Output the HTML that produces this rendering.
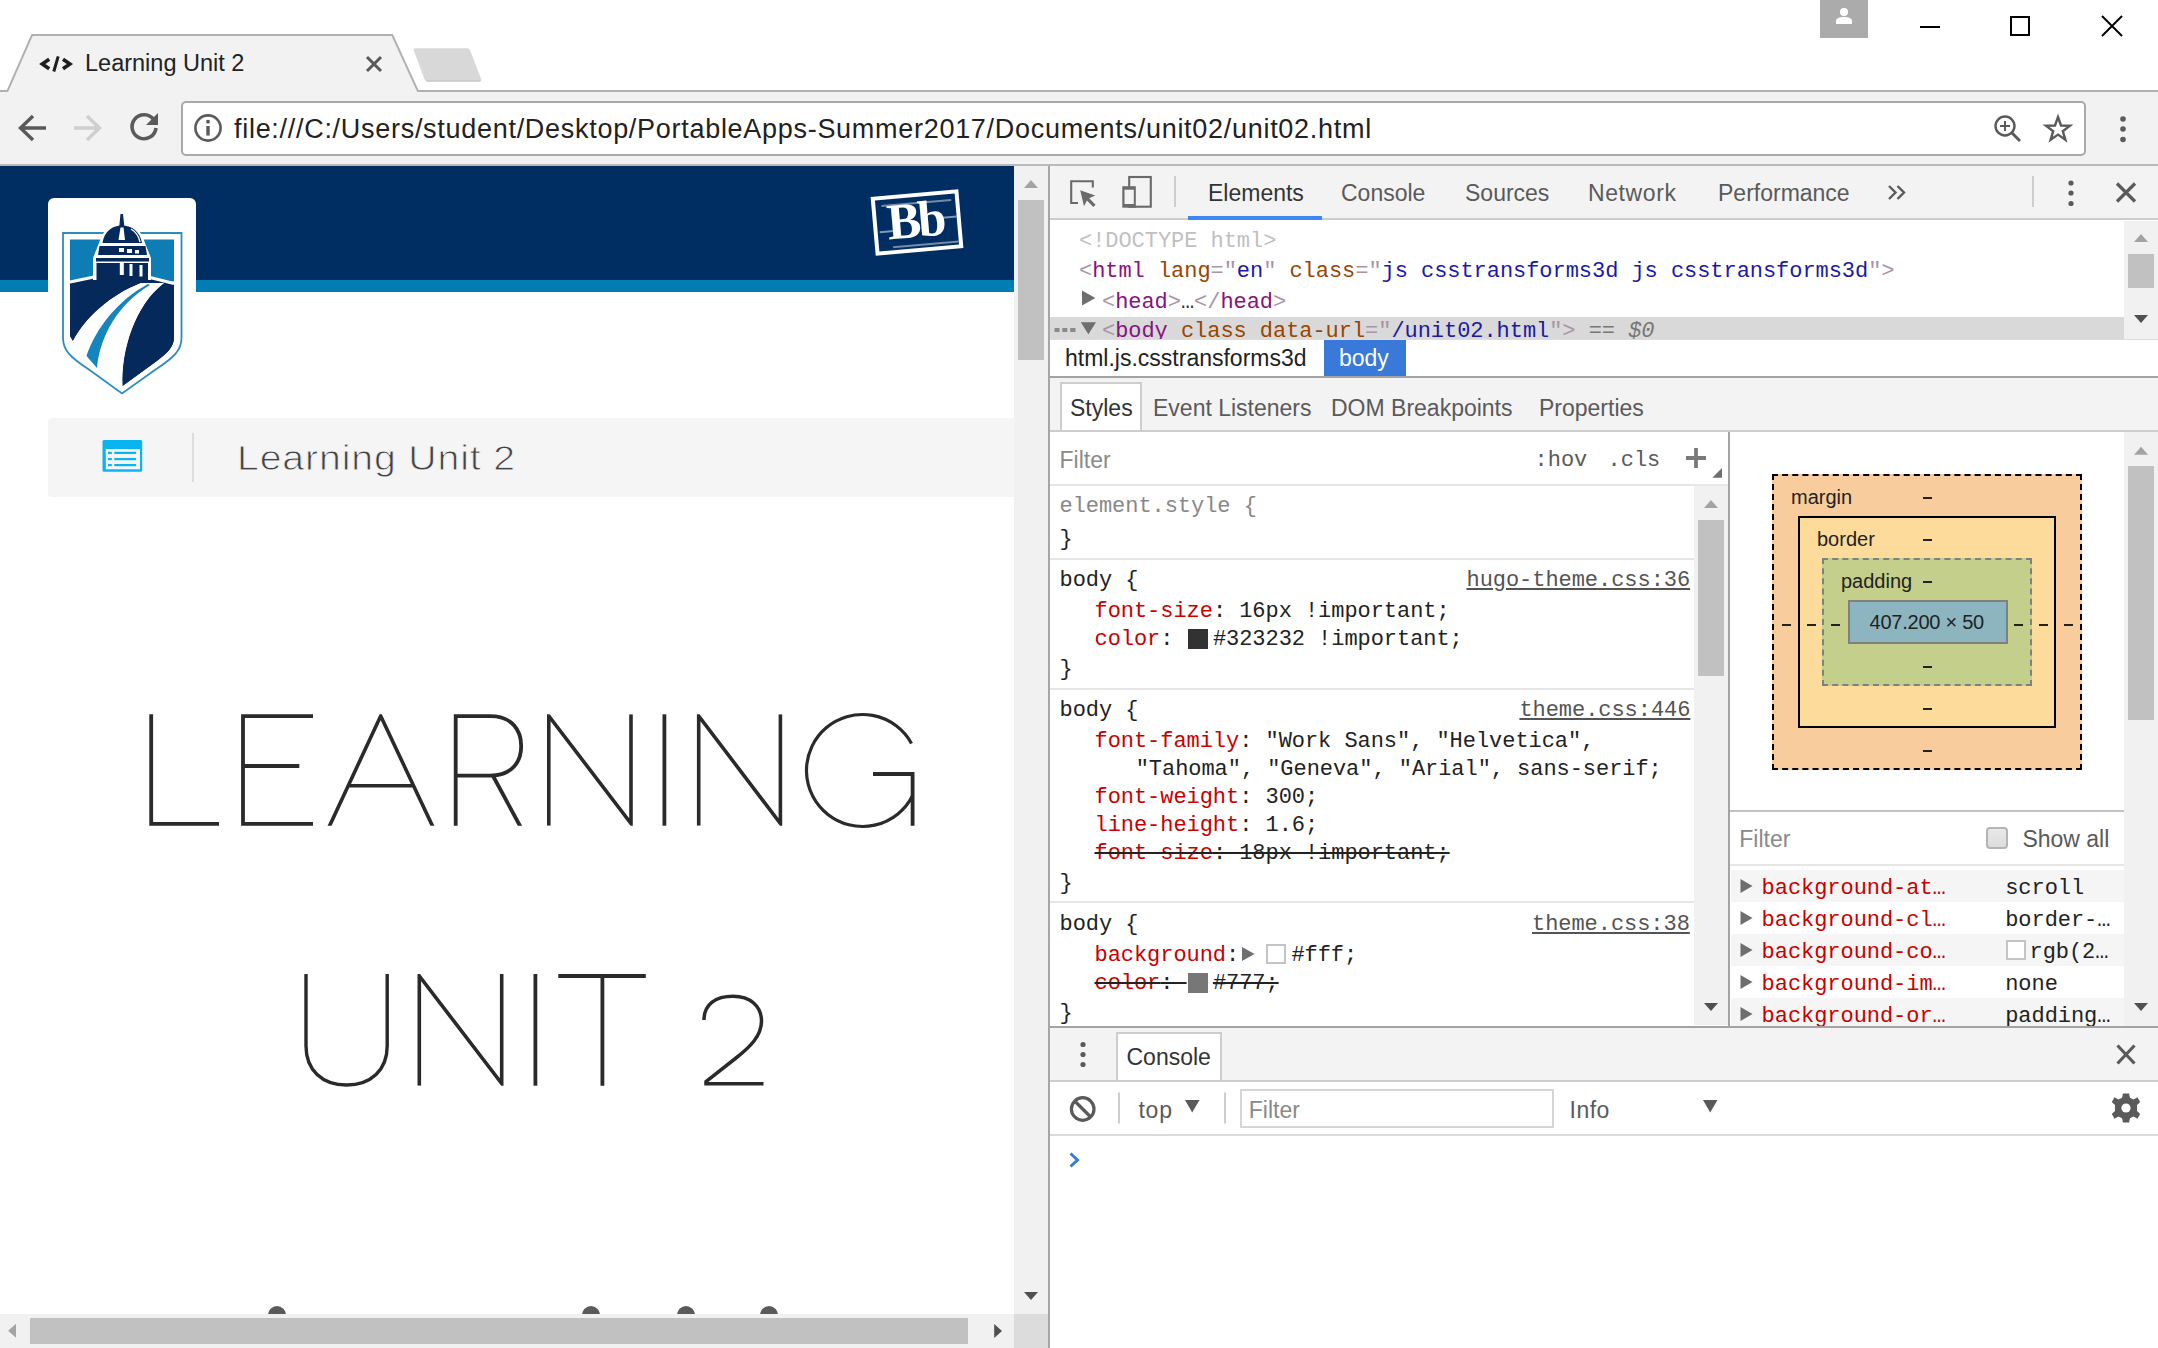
<!DOCTYPE html>
<html lang="en">
<head>
<meta charset="utf-8">
<title>Learning Unit 2</title>
<style>
*{box-sizing:border-box;margin:0;padding:0}
html,body{width:2158px;height:1348px;overflow:hidden;background:#fff}
body{position:relative;font-family:"Liberation Sans",sans-serif;color:#222}
.abs{position:absolute}
.t{position:absolute;white-space:nowrap;line-height:1}
.ui{font-family:"Liberation Sans",sans-serif;font-size:23px;color:#5a5a5a}
.mono{font-family:"Liberation Mono",monospace;font-size:22px;letter-spacing:-0.05px;color:#222}
svg{position:absolute;overflow:visible}
/* ---------- browser chrome ---------- */
#titlebar{left:0;top:0;width:2158px;height:91px;background:#fff}
#toolbar{left:0;top:90px;width:2158px;height:76px;background:#f2f2f2;border-top:2px solid #b3b3b3;border-bottom:2px solid #b9b9b9}
#urlbox{left:181px;top:101px;width:1905px;height:55px;background:#fff;border:2px solid #a9a9a9;border-radius:5px}
/* ---------- page ---------- */
#page{left:0;top:166px;width:1014px;height:1148px;background:#fff;overflow:hidden}
#navy{left:0;top:0;width:1014px;height:114px;background:#002d62}
#stripe{left:0;top:114px;width:1014px;height:12px;background:#007db3}
#logobox{left:48px;top:32px;width:148px;height:200px;background:#fff;border-radius:6px}
#crumb{left:48px;top:252px;width:966px;height:79px;background:#f5f5f5;border-radius:4px 0 0 4px}
#vscroll{left:1014px;top:166px;width:34px;height:1148px;background:#f1f1f1}
#hscroll{left:0;top:1314px;width:1014px;height:34px;background:#f1f1f1}
#corner{left:1014px;top:1314px;width:34px;height:34px;background:#dcdcdc}
.thumb{position:absolute;background:#c1c1c1}
#split{left:1048px;top:166px;width:2px;height:1182px;background:#a6a6a6}
/* ---------- devtools ---------- */
#dt .bar{position:absolute;left:0;width:1108px;background:#f3f3f3}
.sx{color:#a894a6}.tg{color:#881280}.an{color:#994500}.av{color:#1a1aa6}
.pn{color:#c80000}.gr{color:#888}
.lnk{color:#545454;text-decoration:underline}
.sep{position:absolute;left:0;width:644px;height:2px;background:#e6e6e6}
.row{position:absolute;left:0;height:24px}
.sw{position:absolute;width:20px;height:20px;border:2px solid #7d7d7d}

#dt{left:1050px;top:166px;width:1108px;height:1182px;background:#fff;overflow:hidden}
</style>
</head>
<body>
<!-- ===== TITLE BAR ===== -->
<div id="titlebar" class="abs"></div>
<div id="toolbar" class="abs"></div>
<div id="urlbox" class="abs"></div>

<!-- tab shape -->
<svg class="abs" style="left:0;top:0" width="2158" height="95" viewBox="0 0 2158 95">
  <path d="M0,90.900 H7.500 L32,35.100 H392.300 L417.800,90.900 H2158 V95 H0 Z" fill="#f2f2f2"/>
  <path d="M0,90.900 H7.500 L32,35.100 H392.300 L417.800,90.900 H2158" fill="none" stroke="#b0b0b0" stroke-width="2" stroke-linejoin="round"/>
  <!-- new tab button -->
  <path d="M416.500,48.200 H467 C468.500,48.200 469.500,49 470,50.200 L481.200,79 C481.800,80.500 481,81.200 479.500,81.200 H427.500 C426,81.200 425,80.500 424.500,79.200 L413.800,50.500 C413.300,49 414,48.200 416.500,48.200 Z" fill="#d8d8d8"/>
  <path d="M426.500,81 H480.500" stroke="#c6c6c6" stroke-width="1.400"/>
  <!-- favicon </> -->
  <g fill="none" stroke="#1e1e1e" stroke-linejoin="miter"><path d="M49.200,59.200 L42.300,64 L49.200,68.800" stroke-width="3.600"/><path d="M58.200,56.300 L53.800,71.500" stroke-width="3"/><path d="M63,59.200 L69.900,64 L63,68.800" stroke-width="3.600"/></g>
  <!-- tab close -->
  <path d="M367,57 L381,71 M381,57 L367,71" stroke="#5a5a5a" stroke-width="3" fill="none"/>
  <!-- profile button -->
  <rect x="1820" y="0" width="48" height="38" fill="#ababab"/>
  <circle cx="1844" cy="12" r="4" fill="#fff"/>
  <path d="M1836,24 V21 C1836,18 1840,17 1844,17 C1848,17 1852,18 1852,21 V24 Z" fill="#fff"/>
  <!-- window controls -->
  <path d="M1920,27 H1940" stroke="#000" stroke-width="2"/>
  <rect x="2011" y="17" width="18" height="18" fill="none" stroke="#000" stroke-width="2"/>
  <path d="M2102,16 L2122,36 M2122,16 L2102,36" stroke="#000" stroke-width="2"/>
</svg>
<div class="t" id="tabtitle" style="left:85px;top:52px;font-size:23.5px;color:#222">Learning Unit 2</div>
<!-- nav icons -->
<svg class="abs" style="left:0;top:90px" width="2158" height="76" viewBox="0 90 2158 76">
  <g fill="none" stroke="#5a5a5a" stroke-width="3.4">
    <path d="M46,128 H21 M33,116 L20.5,128 L33,140"/>
  </g>
  <g fill="none" stroke="#cfcfcf" stroke-width="3.4">
    <path d="M74,128 H99 M87,116 L99.5,128 L87,140"/>
  </g>
  <!-- reload -->
  <g fill="none" stroke="#5a5a5a" stroke-width="3.6">
    <path d="M154,120 A12,12 0 1 0 156,128"/>
  </g>
  <path d="M158,113 V125 H146 Z" fill="#5a5a5a"/>
  <!-- info icon -->
  <circle cx="208" cy="128" r="12.600" fill="none" stroke="#5a5a5a" stroke-width="2.600"/>
  <rect x="206.300" y="126" width="3.400" height="9.500" fill="#5a5a5a"/>
  <rect x="206.300" y="120" width="3.400" height="3.400" fill="#5a5a5a"/>
  <!-- zoom icon -->
  <circle cx="2005" cy="126" r="9.500" fill="none" stroke="#5a5a5a" stroke-width="2.4"/>
  <path d="M2012,133 L2020,141" stroke="#5a5a5a" stroke-width="3"/>
  <path d="M2000,126 H2010 M2005,121 V131" stroke="#5a5a5a" stroke-width="2"/>
  <!-- star -->
  <path d="M2058.0,117.0 L2061.0,125.5 L2070.0,125.7 L2062.8,131.2 L2065.4,139.8 L2058.0,134.6 L2050.6,139.8 L2053.2,131.2 L2046.0,125.7 L2055.0,125.5 Z" fill="none" stroke="#5a5a5a" stroke-width="2.400" stroke-linejoin="miter"/>
  <!-- menu dots -->
  <circle cx="2123" cy="119" r="2.800" fill="#5a5a5a"/>
  <circle cx="2123" cy="129" r="2.800" fill="#5a5a5a"/>
  <circle cx="2123" cy="139.500" r="2.800" fill="#5a5a5a"/>
</svg>
<div class="t" id="url" style="left:234px;top:116px;font-size:27px;letter-spacing:0.71px;color:#222">file:///C:/Users/student/Desktop/PortableApps-Summer2017/Documents/unit02/unit02.html</div>
<!--CHROME-->
<!-- ===== PAGE ===== -->
<div id="page" class="abs">
  <div id="navy" class="abs"></div>
  <div id="stripe" class="abs"></div>
  <div id="logobox" class="abs"></div>
  <div id="crumb" class="abs"></div>

  <!-- shield logo (absolute screen coords via viewBox) -->
  <svg style="left:40px;top:24px" width="170" height="220" viewBox="40 190 170 220">
    <!-- outer thin border -->
    <path d="M63,233 H181.500 V338 C181.500,350 174.500,357 155.600,369.500 L122,393.500 L88.900,369.500 C70,357 63,350 63,338 Z" fill="#fff" stroke="#2a8cc0" stroke-width="1.8"/>
    <!-- sky -->
    <path d="M70,239.500 H174 V281.500 L70,281.500 Z" fill="#0e7db6"/>
    <!-- ground navy left + right -->
    <path d="M70,283 L94,278 H150 L174,284.500 V337 C174,347 168,353 152,364.500 L122.500,386 C121,350 135,305 164,283 L141,283 C110,295 85,318 73,341 L70,336 Z" fill="#06295c"/>
    <path d="M70,283 H141 C110,295 85,318 73,341 L70,336 Z" fill="#06295c"/>
    <path d="M164,283 L174,284.500 V337 C174,347 168,353 152,364.500 L122.500,386 C121,350 135,305 164,283 Z" fill="#06295c"/>
    <!-- white road -->
    <path d="M141,283 H164 C135,305 121,350 122.500,386 L78,358 C75,352 73.500,347 73,341 C85,318 110,295 141,283 Z" fill="#fff"/>
    <!-- horizon white line -->
    <path d="M70,282 L94,277 M150,277.500 L174,283.500" stroke="#fff" stroke-width="3" fill="none"/>
    <!-- blue stripe on road -->
    <path d="M148,284 C118,300 96,328 86.500,356 L97,368 C100,336 118,304 150,285 Z" fill="#1585bd"/>
    <!-- dome white halo -->
    <path d="M93,280 V258 L99,243 C103,229 112,224 118,223 L120,212 H124 L126,223 C132,224 141,229 145,243 L151,258 V280 Z" fill="#fff"/>
    <!-- dome -->
    <path d="M119.300,226 L120.500,214 H123 L124.300,226 Z" fill="#06295c"/>
    <path d="M102.500,243 C104,231 113,225.500 122,225.500 C131,225.500 140,231 142,243 Z" fill="#06295c"/>
    <path d="M118.500,240 L120.500,227.500 H123.500 L125,240 Z" fill="#fff"/>
    <path d="M131,229 C136,232 139,237 140,242" stroke="#fff" stroke-width="1.300" fill="none"/>
    <path d="M99.500,246 H145.500 L147,255 H98 Z" fill="#06295c"/>
    <path d="M96,258 H149 V261.500 H96 Z" fill="#06295c"/>
    <path d="M96.500,263 H148 V283 H96.500 Z" fill="#06295c"/>
    <rect x="119" y="248" width="5" height="4" fill="#fff"/><rect x="127" y="249" width="5" height="4" fill="#fff"/><rect x="135" y="250" width="4" height="3.500" fill="#fff"/>
    <rect x="119.800" y="263" width="4" height="12" fill="#fff"/><rect x="129.500" y="264" width="3" height="12" fill="#fff"/><rect x="139.500" y="265" width="3" height="11.500" fill="#fff"/>
  </svg>
  <!-- Bb logo -->
  <div class="abs" style="left:873px;top:27px;width:88px;height:59px;border:4px solid #fff;transform:rotate(-5deg);overflow:hidden">
    <div class="t" style="left:10px;top:-2px;font-family:'Liberation Serif',serif;font-weight:bold;font-size:51px;letter-spacing:-3px;color:#fff">Bb</div>
    <div class="abs" style="left:6px;top:5px;width:70px;height:1.500px;background:rgba(255,255,255,.45)"></div>
    <div class="abs" style="left:2px;top:31px;width:14px;height:1.500px;background:rgba(255,255,255,.5)"></div>
    <div class="abs" style="left:66px;top:22px;width:14px;height:1.500px;background:rgba(255,255,255,.5)"></div>
    <div class="abs" style="left:14px;top:47px;width:66px;height:1.500px;background:rgba(255,255,255,.45)"></div>
  </div>
  <!-- crumb icon -->
  <svg style="left:100px;top:272px" width="46" height="36" viewBox="100 438 46 36">
    <rect x="102.500" y="440" width="39.700" height="31.800" rx="1.500" fill="#0ab4f0"/>
    <rect x="105.800" y="449" width="34.200" height="20.300" fill="#f4f6fb"/>
    <g fill="#0ab4f0">
      <rect x="114.300" y="451.800" width="21.800" height="2.200"/><rect x="114.300" y="458" width="21.800" height="2.200"/><rect x="114.300" y="464" width="21.800" height="2.200"/>
      <rect x="108" y="451.800" width="3.800" height="2.200"/><rect x="108" y="458" width="3.800" height="2.200"/><rect x="108" y="464" width="3.800" height="2.200"/>
    </g>
  </svg>
  <div class="abs" style="left:192px;top:267px;width:2px;height:49px;background:#dcdcdc"></div>
  <div class="t" id="crumbtxt" style="left:237px;top:274px;font-size:35px;letter-spacing:0.78px;transform:scaleX(1.12);transform-origin:0 0;color:#444;-webkit-text-stroke:0.9px #f5f5f5">Learning Unit 2</div>
  <!-- big heading -->
  <svg style="left:0;top:0" width="1014" height="1148" viewBox="0 166 1014 1148" fill="none" stroke="#2a2a2a" stroke-width="3.800" stroke-linecap="butt" stroke-linejoin="miter">
    <defs><clipPath id="ln1"><rect x="0" y="714.300" width="1014" height="111.400"/></clipPath><clipPath id="ln2"><rect x="0" y="974" width="1014" height="111.700"/></clipPath></defs>
    <!-- L -->
    <path d="M151.200,714.300 V823.800 H219"/>
    <!-- E -->
    <path d="M313,716.200 H243 V823.800 H313 M243,766 H299.300"/>
    <!-- A -->
    <path clip-path="url(#ln1)" d="M328.700,827.700 L380.700,716 L433.300,827.700 M349,785.800 H413" stroke-width="3.600"/>
    <!-- R -->
    <path d="M455.700,825.700 V716.200 H490 C512,716.200 521.200,730 521.200,746 C521.200,762 512,775.600 490,775.600 H455.700"/>
    <path clip-path="url(#ln1)" d="M492.500,775 L521,827.700"/>
    <!-- N -->
    <path clip-path="url(#ln1)" d="M548.800,825.700 V716 L631,823.500 V714.300" stroke-width="3.600"/>
    <!-- I -->
    <path d="M664.400,714.300 V825.700"/>
    <!-- N -->
    <path clip-path="url(#ln1)" d="M698.700,825.700 V716 L780.400,823.500 V714.300" stroke-width="3.600"/>
    <!-- G -->
    <path d="M911.500,743.400 A56,56 0 1 0 912.500,795.700" stroke-width="3.200"/>
    <path d="M873,774 H912.600 V825.700"/>
    <!-- U -->
    <path d="M306,974 V1046 C306,1070 322,1085 346.600,1085 C371,1085 387.200,1070 387.200,1046 V974" stroke-width="3.400"/>
    <!-- N -->
    <path clip-path="url(#ln2)" d="M419.300,1085.700 V976 L501.700,1083.500 V974" stroke-width="3.600"/>
    <!-- I -->
    <path d="M535.400,974 V1085.700"/>
    <!-- T -->
    <path d="M558.300,976 H645.800 M602.400,976 V1085.700"/>
    <!-- 2 -->
    <path d="M704,1020 C704,1004 716,996.300 733,996.300 C750,996.300 761.500,1006 761.500,1021 C761.500,1036 750,1047 736,1058 L706,1081.500 V1083.800 H763.500" stroke-width="3.500"/>
  </svg>
  <!-- dots at bottom -->
  <div class="abs" style="left:268px;top:1140px;width:18px;height:18px;border-radius:50%;background:#5a5a5a"></div>
  <div class="abs" style="left:582px;top:1140px;width:18px;height:18px;border-radius:50%;background:#5a5a5a"></div>
  <div class="abs" style="left:677px;top:1140px;width:18px;height:18px;border-radius:50%;background:#5a5a5a"></div>
  <div class="abs" style="left:760px;top:1140px;width:18px;height:18px;border-radius:50%;background:#5a5a5a"></div>
  <!--PAGE-->
</div>
<div id="vscroll" class="abs"><div class="thumb" style="left:4px;top:34px;width:26px;height:160px"></div></div>
<div id="hscroll" class="abs"><div class="thumb" style="left:30px;top:4px;width:938px;height:26px"></div></div>
<div id="corner" class="abs"></div>

<svg class="abs" style="left:0;top:0" width="1050" height="1348" viewBox="0 0 1050 1348">
  <path d="M1024,188 L1031,180 L1038,188 Z" fill="#a3a3a3"/>
  <path d="M1024,1292 L1031,1300 L1038,1292 Z" fill="#505050"/>
  <path d="M16,1323.800 L8.200,1330.800 L16,1337.800 Z" fill="#a3a3a3"/>
  <path d="M994.200,1324 L1002,1331 L994.200,1338 Z" fill="#505050"/>
</svg>
<div id="split" class="abs"></div>
<!-- ===== DEVTOOLS ===== -->
<div id="dt" class="abs">

<!-- main toolbar -->
<div class="bar" style="top:0;height:54px;border-bottom:2px solid #cdcdcd"></div>
<svg style="left:0;top:0" width="1108" height="54" viewBox="1050 166 1108 54">
  <!-- inspect icon -->
  <path d="M1078,203 H1071.200 V181.200 H1092.800 V187.600" fill="none" stroke="#6a6a6a" stroke-width="2.100"/>
  <path d="M1080.200,190.300 L1095.200,195.600 L1089.200,198.300 L1095.600,204.700 L1093.300,207 L1086.900,200.600 L1084,206.200 Z" fill="#6a6a6a"/>
  <!-- device icon -->
  <rect x="1129.200" y="177" width="21.600" height="29.700" fill="none" stroke="#6a6a6a" stroke-width="2.100"/>
  <rect x="1122.300" y="186.200" width="13.500" height="21.500" fill="#6a6a6a"/>
  <rect x="1124.500" y="189.700" width="9.300" height="14.300" fill="#f3f3f3"/>
  <rect x="1174" y="176" width="2" height="31" fill="#cdcdcd"/>
  <rect x="1188" y="216" width="134" height="4" fill="#3f87f5"/>
  <!-- >> -->
  <path d="M1889,186 L1895.500,192.500 L1889,199 M1897.500,186 L1904,192.500 L1897.500,199" fill="none" stroke="#5a5a5a" stroke-width="2.400"/>
  <rect x="2032" y="176" width="2" height="31" fill="#cdcdcd"/>
  <circle cx="2071" cy="183" r="2.600" fill="#5a5a5a"/><circle cx="2071" cy="193" r="2.600" fill="#5a5a5a"/><circle cx="2071" cy="203.500" r="2.600" fill="#5a5a5a"/>
  <path d="M2117,183.500 L2135,201.500 M2135,183.500 L2117,201.500" stroke="#5a5a5a" stroke-width="3.200"/>
</svg>
<div class="t ui" id="tEl" style="left:158px;top:16px;color:#333">Elements</div>
<div class="t ui" id="tCo" style="left:291px;top:16px">Console</div>
<div class="t ui" id="tSo" style="left:415px;top:16px">Sources</div>
<div class="t ui" id="tNe" style="left:538px;top:16px;letter-spacing:0.6px">Network</div>
<div class="t ui" id="tPe" style="left:668px;top:16px">Performance</div>

<!-- DOM tree -->
<div class="abs" style="left:0;top:151px;width:1075px;height:23px;background:#d9d9d9"></div>
<div class="t mono" id="dom1" style="left:29px;top:65px;color:#c0c0c0">&lt;!DOCTYPE html&gt;</div>
<div class="t mono" id="dom2" style="left:29px;top:95px"><span class="sx">&lt;</span><span class="tg">html</span> <span class="an">lang</span><span class="sx">="</span><span class="av">en</span><span class="sx">"</span> <span class="an">class</span><span class="sx">="</span><span class="av">js csstransforms3d js csstransforms3d</span><span class="sx">"&gt;</span></div>
<div class="t mono" id="dom3" style="left:52px;top:126px"><span class="sx">&lt;</span><span class="tg">head</span><span class="sx">&gt;</span><span style="color:#333">…</span><span class="sx">&lt;/</span><span class="tg">head</span><span class="sx">&gt;</span></div>
<div class="abs" style="left:0;top:151px;width:1075px;height:22px;overflow:hidden">
  <div class="t mono" id="dom4" style="left:52px;top:4px"><span class="sx">&lt;</span><span class="tg">body</span> <span class="an">class</span> <span class="an">data-url</span><span class="sx">="</span><span class="av">/unit02.html</span><span class="sx">"&gt;</span><span style="color:#777"> == <i>$0</i></span></div>
</div>
<svg style="left:0;top:64px" width="1108" height="112" viewBox="1050 230 1108 112">
  <path d="M1082,290.500 L1095.400,298 L1082,305.500 Z" fill="#6e6e6e"/>
  <path d="M1080.800,322.300 H1096 L1088.400,334.300 Z" fill="#6e6e6e"/>
  <rect x="1054.500" y="328" width="5" height="4" fill="#8a8a8a"/><rect x="1062.300" y="328" width="5" height="4" fill="#8a8a8a"/><rect x="1070.200" y="328" width="5.300" height="4" fill="#8a8a8a"/>
</svg>
<!-- elements scrollbar -->
<div class="abs" style="left:1074px;top:55px;width:34px;height:118px;background:#f1f1f1"><div class="thumb" style="left:4px;top:33px;width:26px;height:34px"></div></div>
<svg style="left:1074px;top:55px" width="34" height="118" viewBox="2124 221 34 118">
  <path d="M2134,242 L2141,234 L2148,242 Z" fill="#a3a3a3"/>
  <path d="M2134,315 L2141,323 L2148,315 Z" fill="#505050"/>
</svg>
<!-- breadcrumb -->
<div class="abs" style="left:0;top:173px;width:1108px;height:39px;background:#fff;border-top:1px solid #ddd;border-bottom:2px solid #a3a3a3"></div>
<div class="abs" style="left:274px;top:174px;width:82px;height:36px;background:#3879d9"></div>
<div class="t ui" id="bc1" style="left:15px;top:181px;color:#222">html.js.csstransforms3d</div>
<div class="t ui" id="bc2" style="left:289px;top:181px;color:#fff">body</div>
<!-- sub tabs -->
<div class="bar" style="top:212px;height:54px;border-bottom:2px solid #cdcdcd"></div>
<div class="abs" style="left:10px;top:216px;width:82px;height:48px;background:#fff;border:2px solid #cdcdcd;border-bottom:none"></div>
<div class="t ui" id="st1" style="left:20px;top:231px;color:#333">Styles</div>
<div class="t ui" id="st2" style="left:103px;top:231px">Event Listeners</div>
<div class="t ui" id="st3" style="left:281px;top:231px">DOM Breakpoints</div>
<div class="t ui" id="st4" style="left:489px;top:231px">Properties</div>

<!-- styles pane -->
<div class="abs" style="left:0;top:318px;width:678px;height:2px;background:#e6e6e6"></div>
<div class="sep" style="top:392px"></div>
<div class="sep" style="top:522px"></div>
<div class="sep" style="top:735px"></div>
<div class="t ui" id="s_f" style="left:9.5px;top:281px;color:#8a8a8a;top:282.5px">Filter</div>
<div class="t mono" id="s_hov" style="left:484.5999999999999px;top:283.5px;color:#5a5a5a">:hov</div>
<div class="t mono" id="s_cls" style="left:557.5999999999999px;top:283.5px;color:#5a5a5a">.cls</div>
<div class="t mono" id="s1" style="left:9.5px;top:329.5px;color:#888">element.style {</div>
<div class="t mono" id="s2" style="left:9.5px;top:362.5px;">}</div>
<div class="t mono" id="s3" style="left:9.5px;top:404px;">body {</div>
<div class="t mono lnk" id="l1" style="left:416.5px;top:404px;">hugo-theme.css:36</div>
<div class="t mono" id="s4" style="left:44.5px;top:434.5px;"><span class="pn">font-size</span>: 16px !important;</div>
<div class="t mono" id="s5" style="left:44.5px;top:463px;"><span class="pn">color</span>: <span style="display:inline-block;width:26.300px"></span>#323232 !important;</div>
<div class="t mono" id="s6" style="left:9.5px;top:492.5px;">}</div>
<div class="t mono" id="s7" style="left:9.5px;top:534px;">body {</div>
<div class="t mono lnk" id="l2" style="left:469.4000000000001px;top:534px;">theme.css:446</div>
<div class="t mono" id="s8" style="left:44.5px;top:565px;"><span class="pn">font-family</span>: "Work Sans", "Helvetica",</div>
<div class="t mono" id="s9" style="left:85.70000000000005px;top:593px;">"Tahoma", "Geneva", "Arial", sans-serif;</div>
<div class="t mono" id="s10" style="left:44.5px;top:621px;"><span class="pn">font-weight</span>: 300;</div>
<div class="t mono" id="s11" style="left:44.5px;top:649px;"><span class="pn">line-height</span>: 1.6;</div>
<div class="t mono" id="s12" style="left:44.5px;top:677px;text-decoration:line-through;text-decoration-thickness:2px"><span class="pn">font-size</span>: 18px !important;</div>
<div class="t mono" id="s13" style="left:9.5px;top:706.5px;">}</div>
<div class="t mono" id="s14" style="left:9.5px;top:747.5px;">body {</div>
<div class="t mono lnk" id="l3" style="left:482px;top:747.5px;">theme.css:38</div>
<div class="t mono" id="s15" style="left:44.5px;top:778.5px;"><span class="pn">background</span>:</div>
<div class="t mono" id="s15b" style="left:241.4000000000001px;top:778.5px;">#fff;</div>
<div class="t mono" id="s16" style="left:44.5px;top:807px;text-decoration:line-through;text-decoration-thickness:2px"><span class="pn">color</span>: <span style="display:inline-block;width:26.300px"></span>#777;</div>
<div class="t mono" id="s17" style="left:9.5px;top:836.5px;">}</div>
<div class="sw" style="left:138px;top:462.5px;background:#323232;border-color:#323232"></div>
<div class="sw" style="left:216px;top:778px;background:#fff;border-color:#c4c4c4"></div>
<div class="sw" style="left:138px;top:806.5px;background:#777;border-color:#777"></div>
<svg style="left:0;top:266px" width="680" height="595" viewBox="1050 432 680 595">
  <path d="M1686,458 H1706 M1696,448 V468" stroke="#7a7a7a" stroke-width="3.800"/>
  <path d="M1722,468 V477.800 H1712.300 Z" fill="#6e6e6e"/>
  <path d="M1242,947 L1254.500,954 L1242,961 Z" fill="#6e6e6e"/>
</svg>
<!-- styles scrollbar -->
<div class="abs" style="left:644px;top:320px;width:34px;height:539px;background:#f1f1f1"><div class="thumb" style="left:4px;top:34px;width:26px;height:156px"></div></div>
<svg style="left:644px;top:321px" width="34" height="538" viewBox="1694 487 34 538">
  <path d="M1704,508 L1711,500 L1718,508 Z" fill="#a3a3a3"/>
  <path d="M1704,1003 L1711,1011 L1718,1003 Z" fill="#505050"/>
</svg>
<div class="abs" style="left:678px;top:266px;width:2px;height:594px;background:#a3a3a3"></div>

<!-- box model -->
<div class="abs" style="left:722px;top:308px;width:310px;height:296px;background:#f9cc9d;border:2px dashed #000"></div>
<div class="abs" style="left:748px;top:350px;width:258px;height:212px;background:#fddb9a;border:2px solid #000"></div>
<div class="abs" style="left:772px;top:392px;width:210px;height:128px;background:#c3cf8a;border:2px dashed #808080"></div>
<div class="abs" style="left:798px;top:434px;width:160px;height:44px;background:#8cb5c0;border:2px solid #808080"></div>
<div class="t ui" id="bm1" style="left:741px;top:320.5px;font-size:20px;color:#222">margin</div>
<div class="t ui" id="bm2" style="left:767px;top:362.5px;font-size:20px;color:#222">border</div>
<div class="t ui" id="bm3" style="left:791px;top:404.5px;font-size:20px;color:#222">padding</div>
<div class="t ui" id="bm4" style="left:819.6px;top:446px;font-size:20px;letter-spacing:-0.25px;color:#222">407.200 × 50</div>
<div class="abs" style="left:872.5px;top:330.5px;width:9px;height:2px;background:#222"></div><div class="abs" style="left:872.5px;top:372.5px;width:9px;height:2px;background:#222"></div><div class="abs" style="left:872.5px;top:415px;width:9px;height:2px;background:#222"></div><div class="abs" style="left:872.5px;top:499.5px;width:9px;height:2px;background:#222"></div><div class="abs" style="left:872.5px;top:541.5px;width:9px;height:2px;background:#222"></div><div class="abs" style="left:872.5px;top:583.5px;width:9px;height:2px;background:#222"></div>
<div class="abs" style="left:732.2px;top:458px;width:9px;height:2px;background:#222"></div><div class="abs" style="left:756.9px;top:458px;width:9px;height:2px;background:#222"></div><div class="abs" style="left:780.5px;top:458px;width:9px;height:2px;background:#222"></div><div class="abs" style="left:964.1px;top:458px;width:9px;height:2px;background:#222"></div><div class="abs" style="left:989.3px;top:458px;width:9px;height:2px;background:#222"></div><div class="abs" style="left:1014px;top:458px;width:9px;height:2px;background:#222"></div>
<!-- computed -->
<div class="abs" style="left:680px;top:644px;width:394px;height:2px;background:#c2c2c2"></div>
<div class="abs" style="left:680px;top:698px;width:394px;height:2px;background:#e6e6e6"></div>
<div class="t ui" id="c_f" style="left:689.3px;top:662px;color:#8a8a8a">Filter</div>
<div class="abs" style="left:936px;top:660.5px;width:22px;height:22px;border:2px solid #b4b4b4;border-radius:4px;background:linear-gradient(#e9e9e9,#dcdcdc)"></div>
<div class="t ui" id="c_sa" style="left:972.4px;top:662px">Show all</div>
<div class="abs" style="left:681px;top:704px;width:393px;height:32px;background:#f5f5f5"></div>
<div class="t mono pn" id="cn0" style="left:711.6px;top:711.5px">background-at…</div>
<div class="t mono" id="cv0" style="left:955.2px;top:711.5px">scroll</div>
<svg style="left:690px;top:712px" width="14" height="16" viewBox="0 0 14 16"><path d="M0.5,1 L12.500,8 L0.5,15 Z" fill="#6e6e6e"/></svg>
<div class="abs" style="left:681px;top:736px;width:393px;height:32px;background:#fff"></div>
<div class="t mono pn" id="cn1" style="left:711.6px;top:743.5px">background-cl…</div>
<div class="t mono" id="cv1" style="left:955.2px;top:743.5px">border-…</div>
<svg style="left:690px;top:744px" width="14" height="16" viewBox="0 0 14 16"><path d="M0.5,1 L12.500,8 L0.5,15 Z" fill="#6e6e6e"/></svg>
<div class="abs" style="left:681px;top:768px;width:393px;height:32px;background:#f5f5f5"></div>
<div class="t mono pn" id="cn2" style="left:711.6px;top:775.5px">background-co…</div>
<div class="t mono" id="cv2" style="left:979.5px;top:775.5px">rgb(2…</div>
<svg style="left:690px;top:776px" width="14" height="16" viewBox="0 0 14 16"><path d="M0.5,1 L12.500,8 L0.5,15 Z" fill="#6e6e6e"/></svg>
<div class="abs" style="left:681px;top:800px;width:393px;height:32px;background:#fff"></div>
<div class="t mono pn" id="cn3" style="left:711.6px;top:807.5px">background-im…</div>
<div class="t mono" id="cv3" style="left:955.2px;top:807.5px">none</div>
<svg style="left:690px;top:808px" width="14" height="16" viewBox="0 0 14 16"><path d="M0.5,1 L12.500,8 L0.5,15 Z" fill="#6e6e6e"/></svg>
<div class="abs" style="left:681px;top:832px;width:393px;height:32px;background:#f5f5f5"></div>
<div class="t mono pn" id="cn4" style="left:711.6px;top:839.5px">background-or…</div>
<div class="t mono" id="cv4" style="left:955.2px;top:839.5px">padding…</div>
<svg style="left:690px;top:840px" width="14" height="16" viewBox="0 0 14 16"><path d="M0.5,1 L12.500,8 L0.5,15 Z" fill="#6e6e6e"/></svg>
<div class="sw" style="left:956px;top:773.5px;background:#fff;border-color:#c4c4c4"></div>
<!-- right scrollbar -->
<div class="abs" style="left:1074px;top:266px;width:34px;height:594px;background:#f1f1f1"><div class="thumb" style="left:4px;top:34px;width:26px;height:254px"></div></div>
<svg style="left:1074px;top:266px" width="34" height="594" viewBox="2124 432 34 594">
  <path d="M2134,454.8 L2141,446.8 L2148,454.8 Z" fill="#a3a3a3"/>
  <path d="M2134,1003 L2141,1011 L2148,1003 Z" fill="#505050"/>
</svg>
<!-- console drawer -->
<div class="bar" style="top:860px;height:56px;border-top:2px solid #a3a3a3;border-bottom:2px solid #cdcdcd"></div>
<div class="abs" style="left:66px;top:866px;width:106px;height:48px;background:#fff;border:2px solid #cdcdcd;border-bottom:none"></div>
<div class="t ui" id="d_c" style="left:76.5px;top:879.5px;color:#333">Console</div>
<div class="abs" style="left:0;top:916px;width:1108px;height:54px;background:#fff;border-bottom:2px solid #dadada"></div>
<div class="abs" style="left:190px;top:923px;width:314px;height:39px;border:2px solid #d6d6d6;background:#fff"></div>
<div class="t ui" id="d_f" style="left:198.8px;top:932.5px;color:#8a8a8a">Filter</div>
<div class="t ui" id="d_top" style="left:88.4px;top:932.5px;letter-spacing:0.8px">top</div>
<div class="t ui" id="d_info" style="left:519.5px;top:932.5px;letter-spacing:0.5px">Info</div>
<svg style="left:0;top:861px" width="1108" height="321" viewBox="1050 1027 1108 321">
  <circle cx="1083" cy="1044.500" r="2.600" fill="#5a5a5a"/><circle cx="1083" cy="1054.500" r="2.600" fill="#5a5a5a"/><circle cx="1083" cy="1064.500" r="2.600" fill="#5a5a5a"/>
  <path d="M2117.500,1045.500 L2134.500,1063.500 M2134.500,1045.500 L2117.500,1063.500" stroke="#5a5a5a" stroke-width="3.200"/>
  <circle cx="1082.700" cy="1109" r="11.300" fill="none" stroke="#5a5a5a" stroke-width="3.200"/>
  <path d="M1074.700,1101 L1090.700,1117" stroke="#5a5a5a" stroke-width="3.200"/>
  <rect x="1118" y="1092.500" width="2" height="31" fill="#cdcdcd"/>
  <rect x="1224" y="1092.500" width="2" height="31" fill="#cdcdcd"/>
  <path d="M1185,1100 H1199.500 L1192.200,1112.500 Z" fill="#5a5a5a"/>
  <path d="M1703,1100 H1717.500 L1710.200,1112.500 Z" fill="#5a5a5a"/>
  <path d="M1070.500,1153.500 L1077.500,1160 L1070.500,1166.500" fill="none" stroke="#3879d9" stroke-width="3"/>
  <!-- gear -->
  <g transform="translate(2126,1108)" fill="#5a5a5a">
    <path d="M-3,-14.500 H3 L4,-10.300 L7.600,-8.600 L11.400,-10.800 L14.200,-6 L11,-3 V3 L14.200,6 L11.400,10.800 L7.600,8.600 L4,10.300 L3,14.500 H-3 L-4,10.300 L-7.600,8.600 L-11.400,10.800 L-14.200,6 L-11,3 V-3 L-14.200,-6 L-11.400,-10.800 L-7.600,-8.600 L-4,-10.300 Z"/>
    <circle cx="0" cy="0" r="4.600" fill="#fff"/>
  </g>
</svg>



</div>
</body>
</html>
